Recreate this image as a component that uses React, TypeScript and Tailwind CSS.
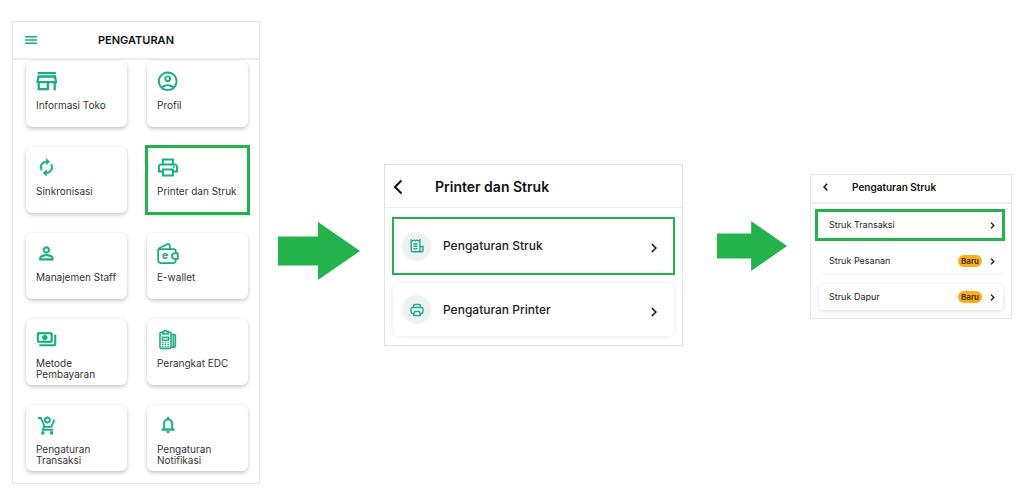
import type { ReactNode } from "react";

function Glyph({ viewBox, bold = false, children }: { viewBox: string; bold?: boolean; children: ReactNode }) {
  return (
    <svg
      viewBox={viewBox}
      className={"size-[22px] shrink-0 fill-[#18ad83]" + (bold ? " stroke-[#18ad83] stroke-[0.6]" : "")}
      aria-hidden="true"
    >
      {children}
    </svg>
  );
}

const storeIcon = (
  <Glyph viewBox="2.6 2.3 19.3 19.3">
    <path d="M18.36 9l.6 3H5.04l.6-3h12.72M20 4H4v2h16V4zm0 3H4l-1 5v2h1v6h10v-6h4v6h2v-6h1v-2l-1-5zM6 18v-4h6v4H6z" />
  </Glyph>
);

const profileIcon = (
  <Glyph viewBox="1.1 0.5 22.4 22.4">
    <path d="M12 2C6.48 2 2 6.48 2 12s4.48 10 10 10 10-4.48 10-10S17.52 2 12 2zM7.35 18.5C8.66 17.56 10.26 17 12 17s3.34.56 4.65 1.5c-1.31.94-2.91 1.5-4.65 1.5s-3.34-.56-4.65-1.5zm10.79-1.38a9.947 9.947 0 0 0-12.28 0A7.957 7.957 0 0 1 4 12c0-4.42 3.58-8 8-8s8 3.58 8 8c0 1.95-.7 3.73-1.86 5.12z" />
    <path d="M12 6c-1.93 0-3.5 1.57-3.5 3.5S10.07 13 12 13s3.5-1.57 3.5-3.5S13.93 6 12 6zm0 5c-.83 0-1.5-.67-1.5-1.5S11.17 8 12 8s1.5.67 1.5 1.5S12.83 11 12 11z" />
  </Glyph>
);

const syncIcon = (
  <Glyph viewBox="-1 -2.1 27.5 27.5" bold>
    <path
      transform="translate(24 0) scale(-1 1)"
      d="M12 4V1L8 5l4 4V6c3.31 0 6 2.69 6 6 0 1.01-.25 1.97-.7 2.8l1.46 1.46C19.54 15.03 20 13.57 20 12c0-4.42-3.58-8-8-8zm0 14c-3.31 0-6-2.69-6-6 0-1.01.25-1.97.7-2.8L5.24 7.74C4.46 8.97 4 10.43 4 12c0 4.42 3.58 8 8 8v3l4-4-4-4v3z"
    />
  </Glyph>
);

const printerIcon = (
  <Glyph viewBox="1.1 0.5 22 22">
    <path d="M19 8h-1V3H6v5H5c-1.66 0-3 1.34-3 3v6h4v4h12v-4h4v-6c0-1.66-1.34-3-3-3zM8 5h8v3H8V5zm8 12v2H8v-4h8v2zm2-2v-2H6v2H4v-4c0-.55.45-1 1-1h14c.55 0 1 .45 1 1v4h-2z" />
    <circle cx="18" cy="11.5" r="1" />
  </Glyph>
);

const staffIcon = (
  <Glyph viewBox="-0.1 -1.2 25.6 25.6" bold>
    <path d="M12 6c1.1 0 2 .9 2 2s-.9 2-2 2-2-.9-2-2 .9-2 2-2m0 9c2.7 0 5.8 1.29 6 2v1H6v-.99c.2-.72 3.3-2.01 6-2.01m0-11C9.79 4 8 5.79 8 8s1.79 4 4 4 4-1.79 4-4-1.79-4-4-4zm0 9c-2.67 0-8 1.34-8 4v3h16v-3c0-2.66-5.33-4-8-4z" />
  </Glyph>
);

const walletIcon = (
  <Glyph viewBox="0.4 0.4 21.2 21.2">
    <g fill="none" stroke="#18ad83" strokeWidth="1.7" strokeLinejoin="round" strokeLinecap="round">
      <path d="M18.5 11V9.2a2 2 0 0 0-2-2H3.4a1.9 1.9 0 0 0-1.9 1.9v8.7a3 3 0 0 0 3 3h11a3 3 0 0 0 3-3v-.8" />
      <path d="M1.7 8c0-1 .6-1.7 1.5-2L10.8 2.4c.7-.3 1.3 0 1.5.7l1 4" />
      <path d="M20.500 11.300v5.400h-3a2.700 2.700 0 0 1 0-5.400z" />
    </g>
    <text x="8.3" y="16.8" textAnchor="middle" fontFamily="Inter, sans-serif" fontWeight="800" fontSize="10">
      e
    </text>
  </Glyph>
);

const paymentIcon = (
  <Glyph viewBox="-0.2 -1 25.5 25.5" bold>
    <path d="M19 14V6c0-1.1-.9-2-2-2H3c-1.1 0-2 .9-2 2v8c0 1.1.9 2 2 2h14c1.1 0 2-.9 2-2zm-2 0H3V6h14v8zm-7-7c-1.66 0-3 1.34-3 3s1.34 3 3 3 3-1.34 3-3-1.34-3-3-3zm13 0v11c0 1.1-.9 2-2 2H4v-2h17V7h2z" />
  </Glyph>
);

const edcIcon = (
  <Glyph viewBox="0 0 22 22">
    <g fill="none" stroke="#18ad83" strokeWidth="1.6" strokeLinejoin="round">
      <path d="M5.5 4.3H4.2A1.2 1.2 0 0 0 3 5.5v13.7a1.2 1.2 0 0 0 1.2 1.2h8.6a1.2 1.2 0 0 0 1.2-1.2V5.5a1.2 1.2 0 0 0-1.2-1.2h-1.300" />
      <path d="M5.8 6V3.6h1.5c0-1.4 2.4-1.4 2.4 0h1.5V6z" />
      <path d="M5.5 9.200h6v3h-6z" />
      <path d="M14.2 6.500h3.200a1 1 0 0 1 1 1v10.600a1 1 0 0 1-1 1h-3.200M16.300 6.500v12.600" />
    </g>
    <path d="M5 13.900h1.500v1.300H5zM7.700 13.900h1.500v1.300H7.700zM10.400 13.900h1.500v1.300h-1.500zM5 16h1.500v1.300H5zM7.700 16h1.500v1.300H7.700zM10.400 16h1.500v1.300h-1.500zM5 18h1.500v1H5zM7.700 18h1.500v1H7.700zM10.400 18h1.500v1h-1.500z" />
  </Glyph>
);

const cartIcon = (
  <Glyph viewBox="0 0 22 22">
    <g fill="none" stroke="#18ad83" strokeWidth="1.8">
      <path d="M2 4h2.900l3.800 8.800h6.700L18.300 5.700" />
      <path d="M8.500 12.500l-1.700 3.300H17.200" />
      <path d="M11.300 3.300l2.400 1.350v2.700l-2.400 1.350-2.400-1.350v-2.700z" />
    </g>
    <circle cx="6.800" cy="18.900" r="1.800" />
    <circle cx="15.500" cy="18.900" r="1.800" />
  </Glyph>
);

const bellIcon = (
  <Glyph viewBox="-1.6 -1.2 27 27" bold>
    <path d="M12 22c1.1 0 2-.9 2-2h-4c0 1.1.9 2 2 2zm6-6v-5c0-3.07-1.63-5.64-4.5-6.32V4c0-.83-.67-1.5-1.5-1.5s-1.5.67-1.5 1.5v.68C7.64 5.36 6 7.92 6 11v5l-2 2v1h16v-1l-2-2zm-2 1H8v-6c0-2.48 1.51-4.5 4-4.5s4 2.02 4 4.5v6z" />
  </Glyph>
);

const menuItems = [
  { label: "Informasi Toko", icon: storeIcon },
  { label: "Profil", icon: profileIcon },
  { label: "Sinkronisasi", icon: syncIcon },
  { label: "Printer dan Struk", icon: printerIcon, highlighted: true },
  { label: "Manajemen Staff", icon: staffIcon },
  { label: "E-wallet", icon: walletIcon },
  { label: "Metode Pembayaran", icon: paymentIcon },
  { label: "Perangkat EDC", icon: edcIcon },
  { label: "Pengaturan Transaksi", icon: cartIcon },
  { label: "Pengaturan Notifikasi", icon: bellIcon },
];

function Chevron({ back = false, className }: { back?: boolean; className: string }) {
  return (
    <svg viewBox="0 0 10 16" className={className} fill="none" stroke="currentColor" aria-hidden="true">
      <path d={back ? "M8.5 1.5L2 8l6.5 6.5" : "M1.5 1.5L8 8l-6.5 6.5"} />
    </svg>
  );
}

function StepArrow({ className }: { className: string }) {
  return (
    <svg viewBox="0 0 82 58" preserveAspectRatio="none" className={className} aria-hidden="true">
      <path d="M0 14.5h40V0l42 29-42 29V43.5H0z" fill="#24b24c" />
    </svg>
  );
}

function SettingsPanel() {
  return (
    <section className="mt-[21px] border border-[#e6e6e6] pb-3">
      <header className="flex h-[38px] items-center border-b-2 border-[#ededed] px-3">
        <button aria-label="Menu" className="flex text-[#18ad83]">
          <svg viewBox="0 0 12 8" className="h-2 w-3" stroke="currentColor" strokeWidth="1.5" aria-hidden="true">
            <path d="M0 .8h12M0 4h12M0 7.200h12" />
          </svg>
        </button>
        <h2 className="flex-1 pr-3 text-center text-[11px] font-semibold">PENGATURAN</h2>
      </header>
      <div className="grid grid-cols-2 gap-5 pt-px pr-[11px] pl-[13px]">
        {menuItems.map((item) => (
          <button
            key={item.label}
            className={
              "flex h-[66px] flex-col items-start gap-2 bg-white px-[10px] pt-[9px] text-left shadow-[0_2px_4px_rgba(0,0,0,0.2),0_0_2px_rgba(0,0,0,0.08)] " +
              (item.highlighted ? "outline-[3px] -outline-offset-1 outline-[#24b24c]" : "rounded-md")
            }
          >
            {item.icon}
            <span className="text-[10px] leading-[11px] text-[#333]">{item.label}</span>
          </button>
        ))}
      </div>
    </section>
  );
}

function PrinterPanel() {
  return (
    <section className="mt-[164px] border border-[#e2e2e2] pb-[9px]">
      <header className="flex h-[43px] items-center gap-8 border-b border-[#ececec] px-2 pt-px">
        <button aria-label="Kembali" className="flex">
          <Chevron back className="h-4 w-[10px] stroke-2" />
        </button>
        <h2 className="text-[14px] font-semibold">Printer dan Struk</h2>
      </header>
      <div className="flex flex-col gap-2 px-2 pt-[9px]">
        <button className="-mx-px flex h-[58px] items-center border-2 border-[#24b24c] px-2">
          <span className="flex size-[29px] items-center justify-center rounded-full bg-[#eef2f5]">
            <svg viewBox="0 0 14 14" className="size-[14px]" fill="none" stroke="#18ad83" strokeWidth="1.4" aria-hidden="true">
              <path d="M1.2 1l1.5 1 1.4-1 1.5 1L7.1 1l1.4 1L10 1v11.7H2.700a1.500 1.500 0 0 1-1.500-1.500zM10 7.500h3v3.700a1.500 1.500 0 0 1-3 0M3.500 5h4M3.500 7.300h4M3.500 9.700h4" />
            </svg>
          </span>
          <span className="flex-1 pl-3 text-left text-[12px] font-medium text-[#222]">Pengaturan Struk</span>
          <Chevron className="mr-[6px] h-[10px] w-[10px] translate-y-0.5 stroke-[2.4]" />
        </button>
        <button className="flex h-[53px] items-center rounded-md px-[9px] shadow-[0_0_5px_rgba(0,0,0,0.1)]">
          <span className="flex size-[29px] items-center justify-center rounded-full bg-[#eef2f5]">
            <svg viewBox="0 0 14 14" className="size-[14px]" fill="none" stroke="#18ad83" strokeWidth="1.4" strokeLinejoin="round" aria-hidden="true">
              <path d="M3.500 4.500V3A1.500 1.500 0 0 1 5 1.500h4A1.500 1.500 0 0 1 10.500 3v1.500M3.500 10.500h-1A1.500 1.500 0 0 1 1 9V6a1.500 1.500 0 0 1 1.500-1.500h9A1.500 1.500 0 0 1 13 6v3a1.500 1.500 0 0 1-1.500 1.500h-1M4.500 8.500h5l1 4h-7z" />
            </svg>
          </span>
          <span className="flex-1 pl-3 text-left text-[12px] font-medium text-[#222]">Pengaturan Printer</span>
          <Chevron className="mr-[6px] h-[10px] w-[10px] translate-y-0.5 stroke-[2.4]" />
        </button>
      </div>
    </section>
  );
}

function ReceiptRow({ label, isNew, className }: { label: string; isNew?: boolean; className: string }) {
  return (
    <button className={"flex items-center gap-2 " + className}>
      <span className="flex-1 text-left text-[9px] leading-3 text-[#222]">{label}</span>
      {isNew && (
        <span className="rounded-full bg-[#fbae17] px-[3px] text-[8px] leading-3 font-semibold text-[#3a2a08]">Baru</span>
      )}
      <Chevron className="h-[7px] w-[5px] stroke-[3]" />
    </button>
  );
}

function ReceiptPanel() {
  return (
    <section className="mt-[174px] border border-[#e6e6e6] pb-2">
      <header className="flex h-[29px] items-center gap-6 border-b-2 border-[#ededed] px-3 pb-1">
        <button aria-label="Kembali" className="flex">
          <Chevron back className="h-2 w-[5px] stroke-[3]" />
        </button>
        <h2 className="text-[10px] leading-4 font-semibold">Pengaturan Struk</h2>
      </header>
      <div className="flex flex-col px-1 pt-[5px]">
        <ReceiptRow label="Struk Transaksi" className="mr-0.5 h-8 border-3 border-[#24b24c] pr-[7px] pl-[11px]" />
        <ReceiptRow label="Struk Pesanan" isNew className="mx-1 mt-[7px] h-[27px] border-b border-[#f3f3f3] pr-2 pl-[10px]" />
        <ReceiptRow
          label="Struk Dapur"
          isNew
          className="mx-1 mt-[9px] h-[26px] rounded-sm pr-2 pl-[10px] shadow-[0_1px_4px_rgba(0,0,0,0.15)]"
        />
      </div>
    </section>
  );
}

export default function App() {
  return (
    <main className="grid min-h-screen grid-cols-[248fr_124fr_299fr_127fr_202fr] items-start bg-white px-3 pb-4 font-['Inter',sans-serif] text-[#111]">
      <SettingsPanel />
      <div className="mt-[222px] pl-[18px]">
        <StepArrow className="h-[58px] w-[82px]" />
      </div>
      <PrinterPanel />
      <div className="mt-[221px] pl-[34px]">
        <StepArrow className="h-[50px] w-[70px]" />
      </div>
      <ReceiptPanel />
    </main>
  );
}
